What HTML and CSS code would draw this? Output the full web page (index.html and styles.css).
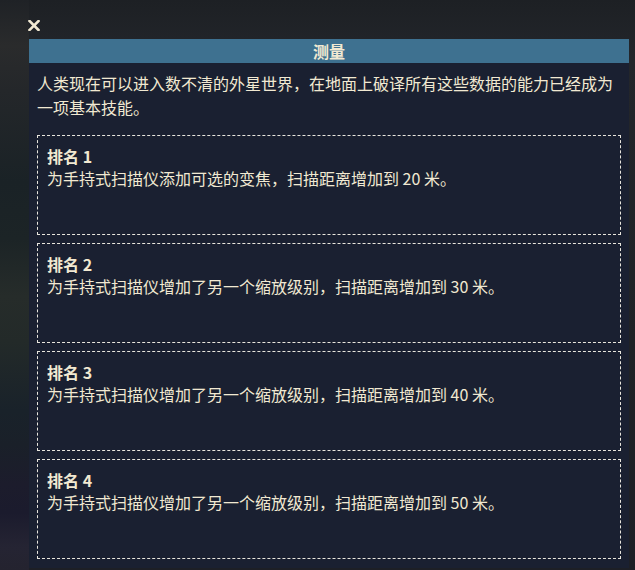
FILE: index.html
```html
<!DOCTYPE html>
<html lang="zh-CN">
<head>
<meta charset="utf-8">
<title>测量</title>
<link rel="stylesheet" href="styles.css">
</head>
<body>
<div class="page">
  <button class="close" aria-label="关闭">
    <svg width="12" height="11" viewBox="0 0 12 11"><path d="M1.5 1 L10.5 10 M10.5 1 L1.5 10" stroke="#f1e9d2" stroke-width="2.6" stroke-linecap="square"/></svg>
  </button>
  <section class="panel">
    <header class="panel-head">测量</header>
    <div class="panel-body">
      <p class="intro">人类现在可以进入数不清的外星世界，在地面上破译所有这些数据的能力已经成为一项基本技能。</p>
      <div class="ranks">
        <div class="rank">
          <div class="rank-title">排名 1</div>
          <div class="rank-desc">为手持式扫描仪添加可选的变焦，扫描距离增加到 20 米。</div>
        </div>
        <div class="rank">
          <div class="rank-title">排名 2</div>
          <div class="rank-desc">为手持式扫描仪增加了另一个缩放级别，扫描距离增加到 30 米。</div>
        </div>
        <div class="rank">
          <div class="rank-title">排名 3</div>
          <div class="rank-desc">为手持式扫描仪增加了另一个缩放级别，扫描距离增加到 40 米。</div>
        </div>
        <div class="rank">
          <div class="rank-title">排名 4</div>
          <div class="rank-desc">为手持式扫描仪增加了另一个缩放级别，扫描距离增加到 50 米。</div>
        </div>
      </div>
    </div>
  </section>
</div>
</body>
</html>
```
FILE: styles.css
```css
html, body {
  margin: 0;
  padding: 0;
}
body {
  width: 635px;
  height: 570px;
  overflow: hidden;
  background:
    linear-gradient(180deg,
      #1f2226 0%, #2a2b2c 8%, #24272a 16%, #1a2226 32%, #1c2426 42%,
      #262c2a 52%, #232a29 60%, #19222a 72%, #1a2029 78%,
      #1c1c2c 85%, #1b1b2d 90%, #252433 96%, #24232f 100%) 0 0 / 29px 100% no-repeat,
    linear-gradient(180deg, #1d2024 0%, #23262b 10%, #1f2226 60%, #1d1f26 100%);
  font-family: "Noto Sans CJK SC", "Noto Sans", sans-serif;
  color: #f1e9d2;
}
.page {
  padding: 19px 6px 0 29px;
  display: flex;
  flex-direction: column;
}
.close {
  width: 12px;
  height: 12px;
  margin: 0 0 8px -1px;
  padding: 0;
  border: 0;
  background: none;
  display: flex;
  align-items: center;
  justify-content: center;
  cursor: pointer;
}
.close svg {
  display: block;
}
.panel {
  width: 600px;
  background: #1a2031;
}
.panel-head {
  height: 24px;
  line-height: 24px;
  background: #3e7190;
  text-align: center;
  font-weight: 700;
  font-size: 16px;
  color: #f1e9d2;
}
.panel-body {
  padding: 8px 8px 9px 8px;
}
.intro {
  margin: 0 0 16px 0;
  font-size: 16px;
  line-height: 24px;
}
.ranks {
  display: flex;
  flex-direction: column;
  gap: 8px;
}
.rank {
  height: 100px;
  box-sizing: border-box;
  border: 1px dashed #e9e6de;
  padding: 9px 9px 0 9px;
  font-size: 16px;
  line-height: 22px;
}
.rank-title {
  font-weight: 700;
}
.rank-desc {
  font-weight: 400;
}
```
